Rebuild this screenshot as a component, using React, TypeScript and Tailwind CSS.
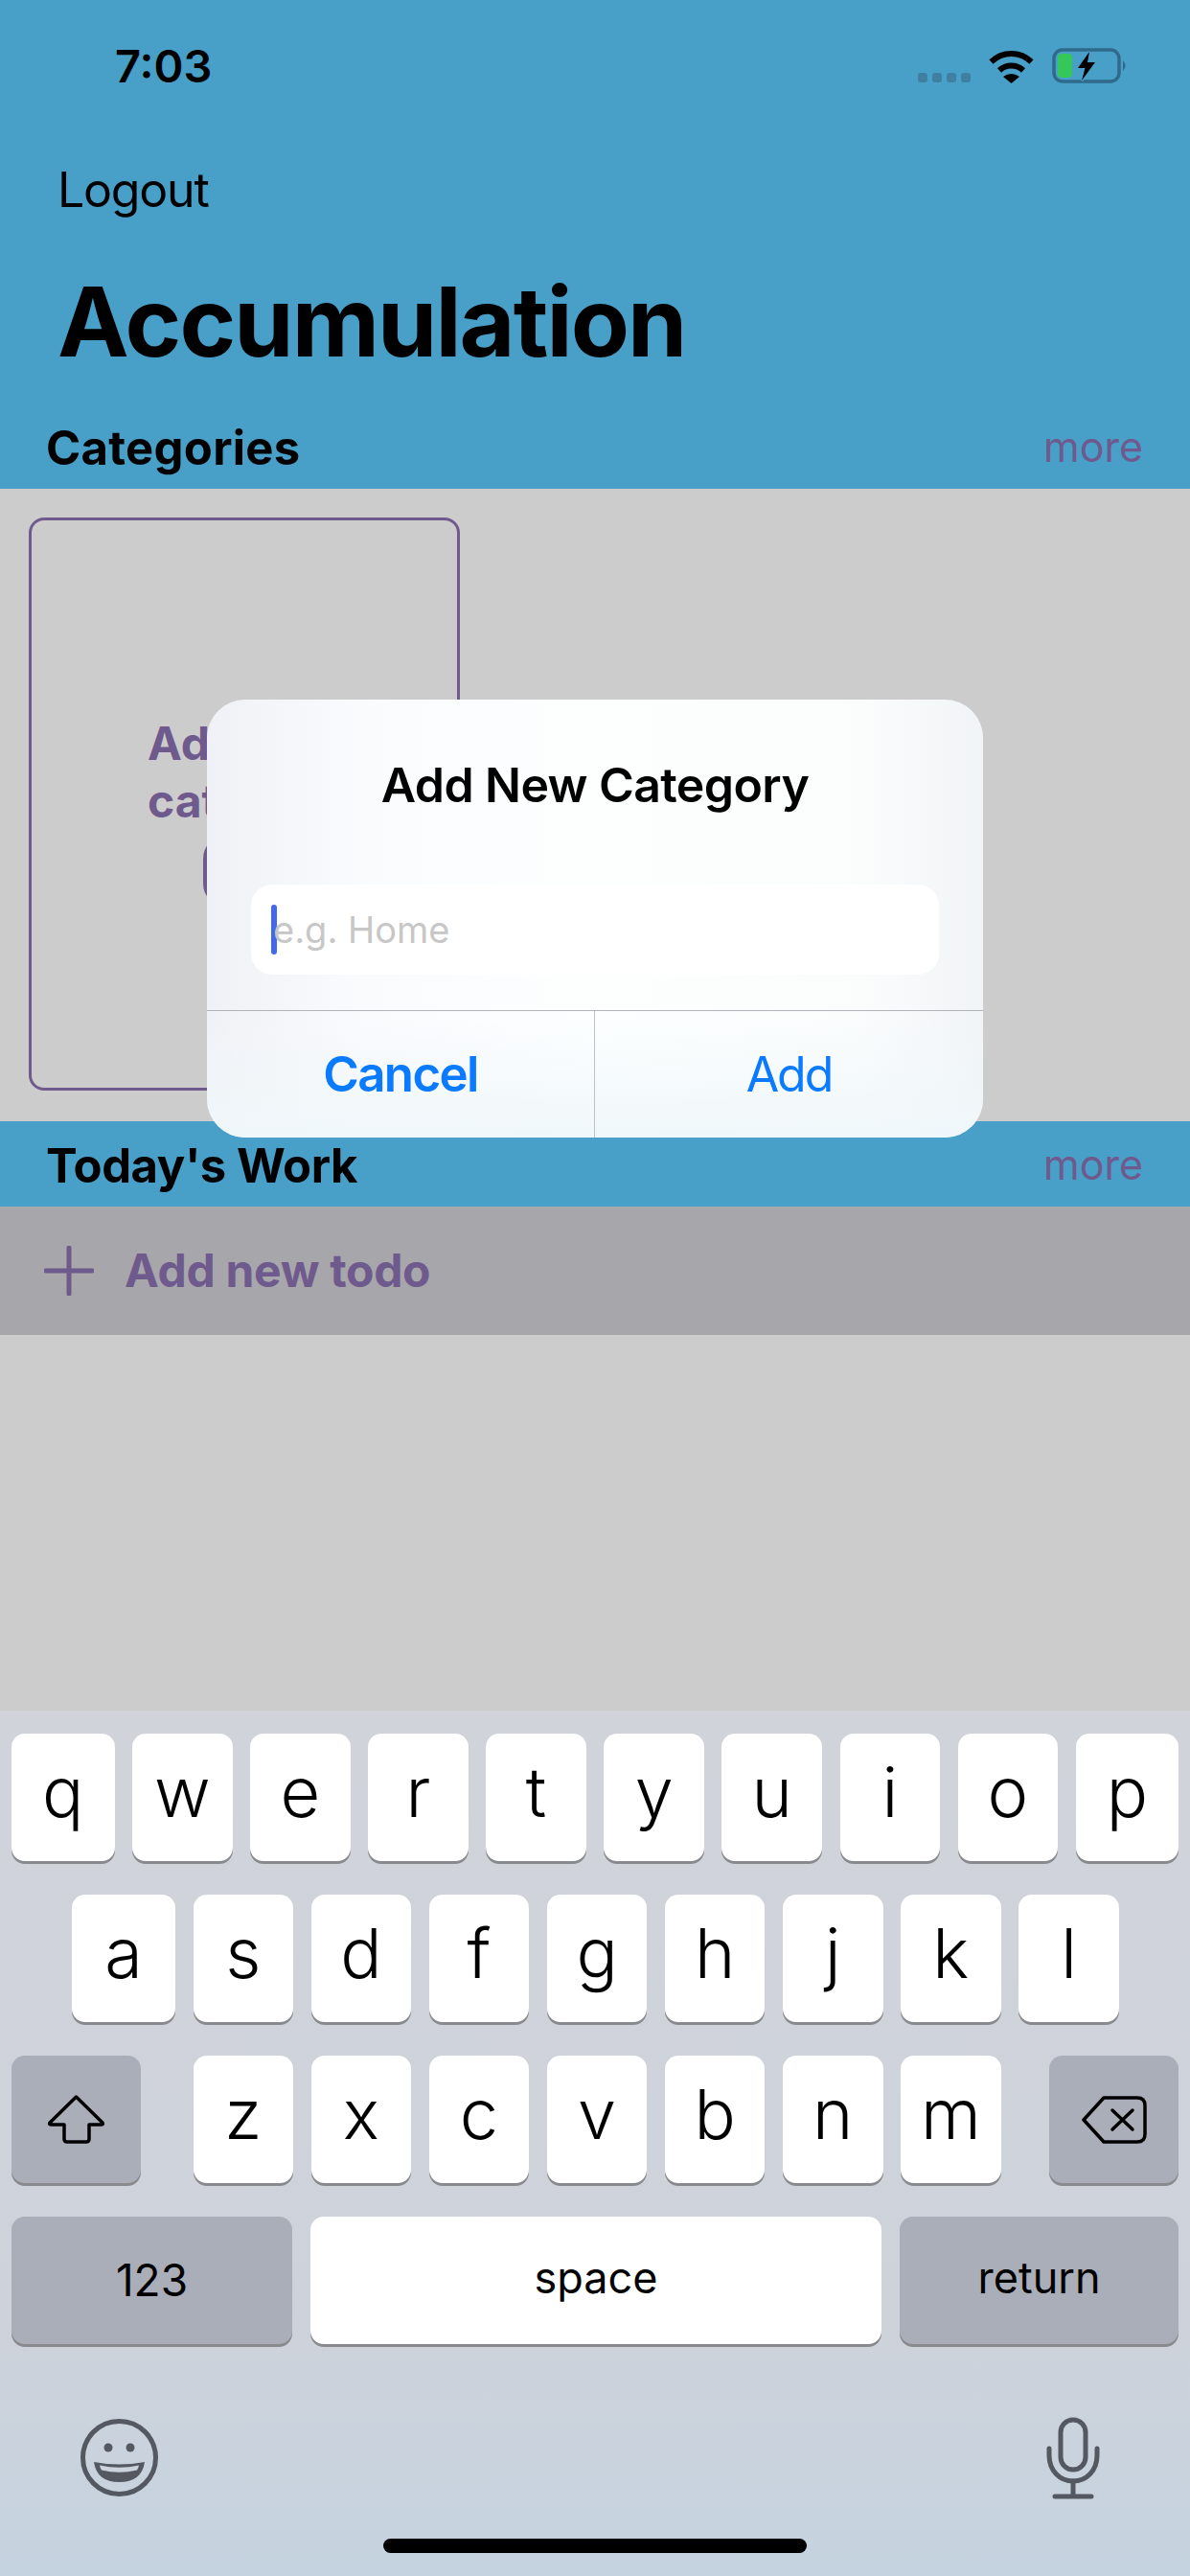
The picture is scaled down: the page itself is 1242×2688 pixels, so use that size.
import React from "react";

const ROW_ONE = ["w", "e", "r", "t", "y", "u", "i", "o"];
const ROW_TWO = ["s", "d", "f", "g", "h", "j", "k"];
const ROW_THREE = ["z", "x", "c", "v", "b", "n", "m"];

const LetterKey = ({ label, className = "w-[104.6px]" }: { label: string; className?: string }) => (
  <div
    className={`flex h-[133px] shrink-0 items-center justify-center rounded-[14px] bg-white pb-[12px] text-[72px] font-light text-black shadow-[0_3px_0_#898a8e] ${className}`}
  >
    {label}
  </div>
);

const GrayKey = ({ children, className = "" }: { children: React.ReactNode; className?: string }) => (
  <div
    className={`flex h-[133px] shrink-0 items-center justify-center rounded-[14px] bg-[#a9aeb8] text-black shadow-[0_3px_0_#898a8e] ${className}`}
  >
    {children}
  </div>
);

const SectionHeader = ({ title, titleClass }: { title: string; titleClass: string }) => (
  <div className="flex h-[89px] shrink-0 items-center justify-between bg-[#48a0c9] pl-[48px] pr-[49px]">
    <span className={`pt-[3px] text-[49px] font-bold leading-none text-black ${titleClass}`}>{title}</span>
    <span className="pt-[1px] text-[43px] leading-none text-[#6f5a8e]">more</span>
  </div>
);

const StatusIcons = () => (
  <div className="flex items-end">
    <div className="mb-[1px] flex gap-[5px]">
      <span className="h-[10px] w-[10px] rounded-[3px] bg-[#3f7fa1]" />
      <span className="h-[10px] w-[10px] rounded-[3px] bg-[#3f7fa1]" />
      <span className="h-[10px] w-[10px] rounded-[3px] bg-[#3f7fa1]" />
      <span className="h-[10px] w-[10px] rounded-[3px] bg-[#3f7fa1]" />
    </div>
    <svg className="ml-[19px]" width="47" height="36" viewBox="0 0 47 36">
      <path d="M2.5 13.5A30 30 0 0 1 44.500 13.500" fill="none" stroke="#000" strokeWidth="6" />
      <path d="M11 22.500A18 18 0 0 1 36 22.500" fill="none" stroke="#000" strokeWidth="6" />
      <path d="M23.500 36L15 29Q23.500 23 32 29Z" fill="#000" />
    </svg>
    <svg className="ml-[19px]" width="80" height="37" viewBox="0 0 80 37">
      <rect x="2" y="2" width="68" height="33" rx="9" fill="none" stroke="#2f6a8b" strokeWidth="3.500" />
      <rect x="6" y="6" width="15" height="25" rx="4" fill="#34c759" />
      <path
        d="M39 4L27 21H34.500L31 34L45 15H37Z"
        fill="#000"
        stroke="#48a0c9"
        strokeWidth="3"
        paintOrder="stroke"
      />
      <path d="M74 13Q79 18.500 74 24Z" fill="#2f6a8b" />
    </svg>
  </div>
);

const ShiftIcon = () => (
  <svg width="60" height="53" viewBox="0 0 60 53" fill="none" stroke="#000" strokeWidth="3.500" strokeLinejoin="round">
    <path d="M29.500 3L57 30Q58 32 56 32H43V47Q43 50 40 50H20Q17 50 17 47V32H3Q1 32 2 30Z" />
  </svg>
);

const DeleteIcon = () => (
  <svg width="68" height="50" viewBox="0 0 68 50" fill="none" stroke="#000" strokeWidth="3.500" strokeLinejoin="round" strokeLinecap="round">
    <path d="M23 2H58Q66 2 66 10V40Q66 48 58 48H23L2 25Z" />
    <path d="M32 15L53 35M53 15L32 35" />
  </svg>
);

const EmojiIcon = () => (
  <svg width="81" height="81" viewBox="0 0 81 81">
    <circle cx="40.500" cy="40.500" r="38" fill="none" stroke="#535861" strokeWidth="5" />
    <circle cx="29" cy="30" r="4.500" fill="#535861" />
    <circle cx="52" cy="30" r="4.500" fill="#535861" />
    <path d="M14 45Q40.500 50 67 45Q64 66 40.500 66Q17 66 14 45Z" fill="#535861" />
    <path d="M20 48.500Q40.500 53 61 48.500Q60.500 51.500 59 53.500Q40.500 58 22 53.500Q20.500 51.500 20 48.500Z" fill="#cdd3dd" />
  </svg>
);

const MicIcon = () => (
  <svg width="56" height="86" viewBox="0 0 56 86" fill="none" stroke="#535861" strokeWidth="5" strokeLinecap="round">
    <rect x="15" y="3" width="26" height="52" rx="13" />
    <path d="M3 33V40C3 56 14 67 28 67C42 67 53 56 53 40V33" />
    <path d="M28 67V83M9 83H47" />
  </svg>
);

const AddCategoryDialog = () => (
  <div className="absolute left-[216px] top-[730px] flex h-[457px] w-[810px] flex-col overflow-hidden rounded-[40px] bg-[linear-gradient(to_right,#f0f1f6,#fafbfd_20%,#fdffff_50%,#fbfdfd_84%,#f1f4f6)]">
    <div className="flex h-[193px] shrink-0 flex-col items-center">
      <h2 className="mt-[54px] text-[50px] font-semibold leading-[70px] tracking-[-0.6px] text-black">Add New Category</h2>
    </div>
    <div className="mx-[46px] flex h-[94px] shrink-0 items-center rounded-[22px] bg-white pl-[21px]">
      <span className="h-[52px] w-[6px] shrink-0 rounded-full bg-[#4268f0]" />
      <span className="-ml-[4px] text-[38px] text-[#c7c7c7]">e.g. Home</span>
    </div>
    <div className="mt-[37px] flex flex-1 border-t border-[#b0b4b8] bg-[linear-gradient(to_bottom,#f9fcfd00,#f0f7fa)]">
      <div className="flex w-[405px] items-center justify-center border-r border-[#bcc2c6] text-[51px] font-semibold tracking-[-1.6px] text-[#0a7aff]">
        Cancel
      </div>
      <div className="flex flex-1 items-center justify-center text-[50px] tracking-[-2px] text-[#0a7aff]">Add</div>
    </div>
  </div>
);

export default function App() {
  return (
    <div className="relative flex h-[2688px] w-[1242px] flex-col overflow-hidden bg-[#cccccc] font-['Inter',sans-serif]">
      <header className="flex h-[421px] shrink-0 flex-col bg-[#48a0c9]">
        <div className="flex h-[136px] shrink-0 items-center justify-between pl-[120px] pr-[64px]">
          <span className="text-[47px] font-semibold leading-none text-black">7:03</span>
          <StatusIcons />
        </div>
        <div className="mt-[34px] pl-[60px] text-[50px] leading-[56px] tracking-[-1.2px] text-black">Logout</div>
        <h1 className="mt-[54px] pl-[60px] text-[100px] font-bold leading-[112px] tracking-[-1.9px] text-black">Accumulation</h1>
      </header>
      <SectionHeader title="Categories" titleClass="tracking-[0.3px]" />

      <section className="h-[660px] shrink-0 pl-[30px] pt-[30px]">
        <div className="flex h-[598px] w-[450px] flex-col rounded-[16px] border-[3px] border-[#6f5a8e] pl-[121px] pt-[203px]">
          <p className="text-[48px] font-bold leading-[60px] text-[#6f5a8e]">
            Add new
            <br />
            category
          </p>
          <div className="ml-[58px] mt-[6px] flex h-[74px] w-[190px] items-center justify-center rounded-[24px] border-[4px] border-[#6f5a8e] text-[40px] text-[#6f5a8e]">
            Add
          </div>
        </div>
      </section>

      <SectionHeader title="Today's Work" titleClass="tracking-[-0.4px]" />
      <div className="flex h-[134px] shrink-0 items-center gap-[32px] bg-[#a7a6aa] pl-[46px]">
        <svg width="52" height="52" viewBox="0 0 52 52" stroke="#6f5a8e" strokeWidth="5" strokeLinecap="round">
          <path d="M26 2V50M2 26H50" />
        </svg>
        <span className="text-[48px] font-bold leading-none tracking-[-0.3px] text-[#6f5a8e]">Add new todo</span>
      </div>

      <div className="flex-1" />

      <div className="relative flex h-[903px] shrink-0 flex-col gap-[35px] bg-gradient-to-b from-[#d0d3da] via-[#ced2da] via-70% to-[#c5d3e0] px-[12px] pt-[24px]">
        <div className="flex gap-[18.5px]">
          <LetterKey label="q" className="w-[107.5px]" />
          {ROW_ONE.map((letter) => (
            <LetterKey key={letter} label={letter} />
          ))}
          <LetterKey label="p" className="w-[107.5px]" />
        </div>
        <div className="flex gap-[18.5px] pl-[63px]">
          <LetterKey label="a" className="w-[108px]" />
          {ROW_TWO.map((letter) => (
            <LetterKey key={letter} label={letter} />
          ))}
          <LetterKey label="l" className="w-[105px]" />
        </div>
        <div className="flex">
          <GrayKey className="w-[135px]">
            <ShiftIcon />
          </GrayKey>
          <div className="ml-[54.5px] flex gap-[18.5px]">
            {ROW_THREE.map((letter) => (
              <LetterKey key={letter} label={letter} />
            ))}
          </div>
          <GrayKey className="ml-auto w-[135px]">
            <DeleteIcon />
          </GrayKey>
        </div>
        <div className="flex gap-[19px]">
          <GrayKey className="w-[293px] text-[46px]">123</GrayKey>
          <div className="flex h-[133px] w-[596px] items-center justify-center rounded-[14px] bg-white pb-[6px] text-[45px] text-black shadow-[0_3px_0_#898a8e]">
            space
          </div>
          <GrayKey className="flex-1 pb-[6px] text-[45px]">return</GrayKey>
        </div>

        <div className="mt-[41px] flex items-start justify-between pl-[72px] pr-[82px]">
          <div className="mt-[2px]">
            <EmojiIcon />
          </div>
          <MicIcon />
        </div>

        <div className="absolute bottom-[24px] left-[400px] h-[15px] w-[442px] rounded-full bg-black" />
      </div>

      <AddCategoryDialog />
    </div>
  );
}
